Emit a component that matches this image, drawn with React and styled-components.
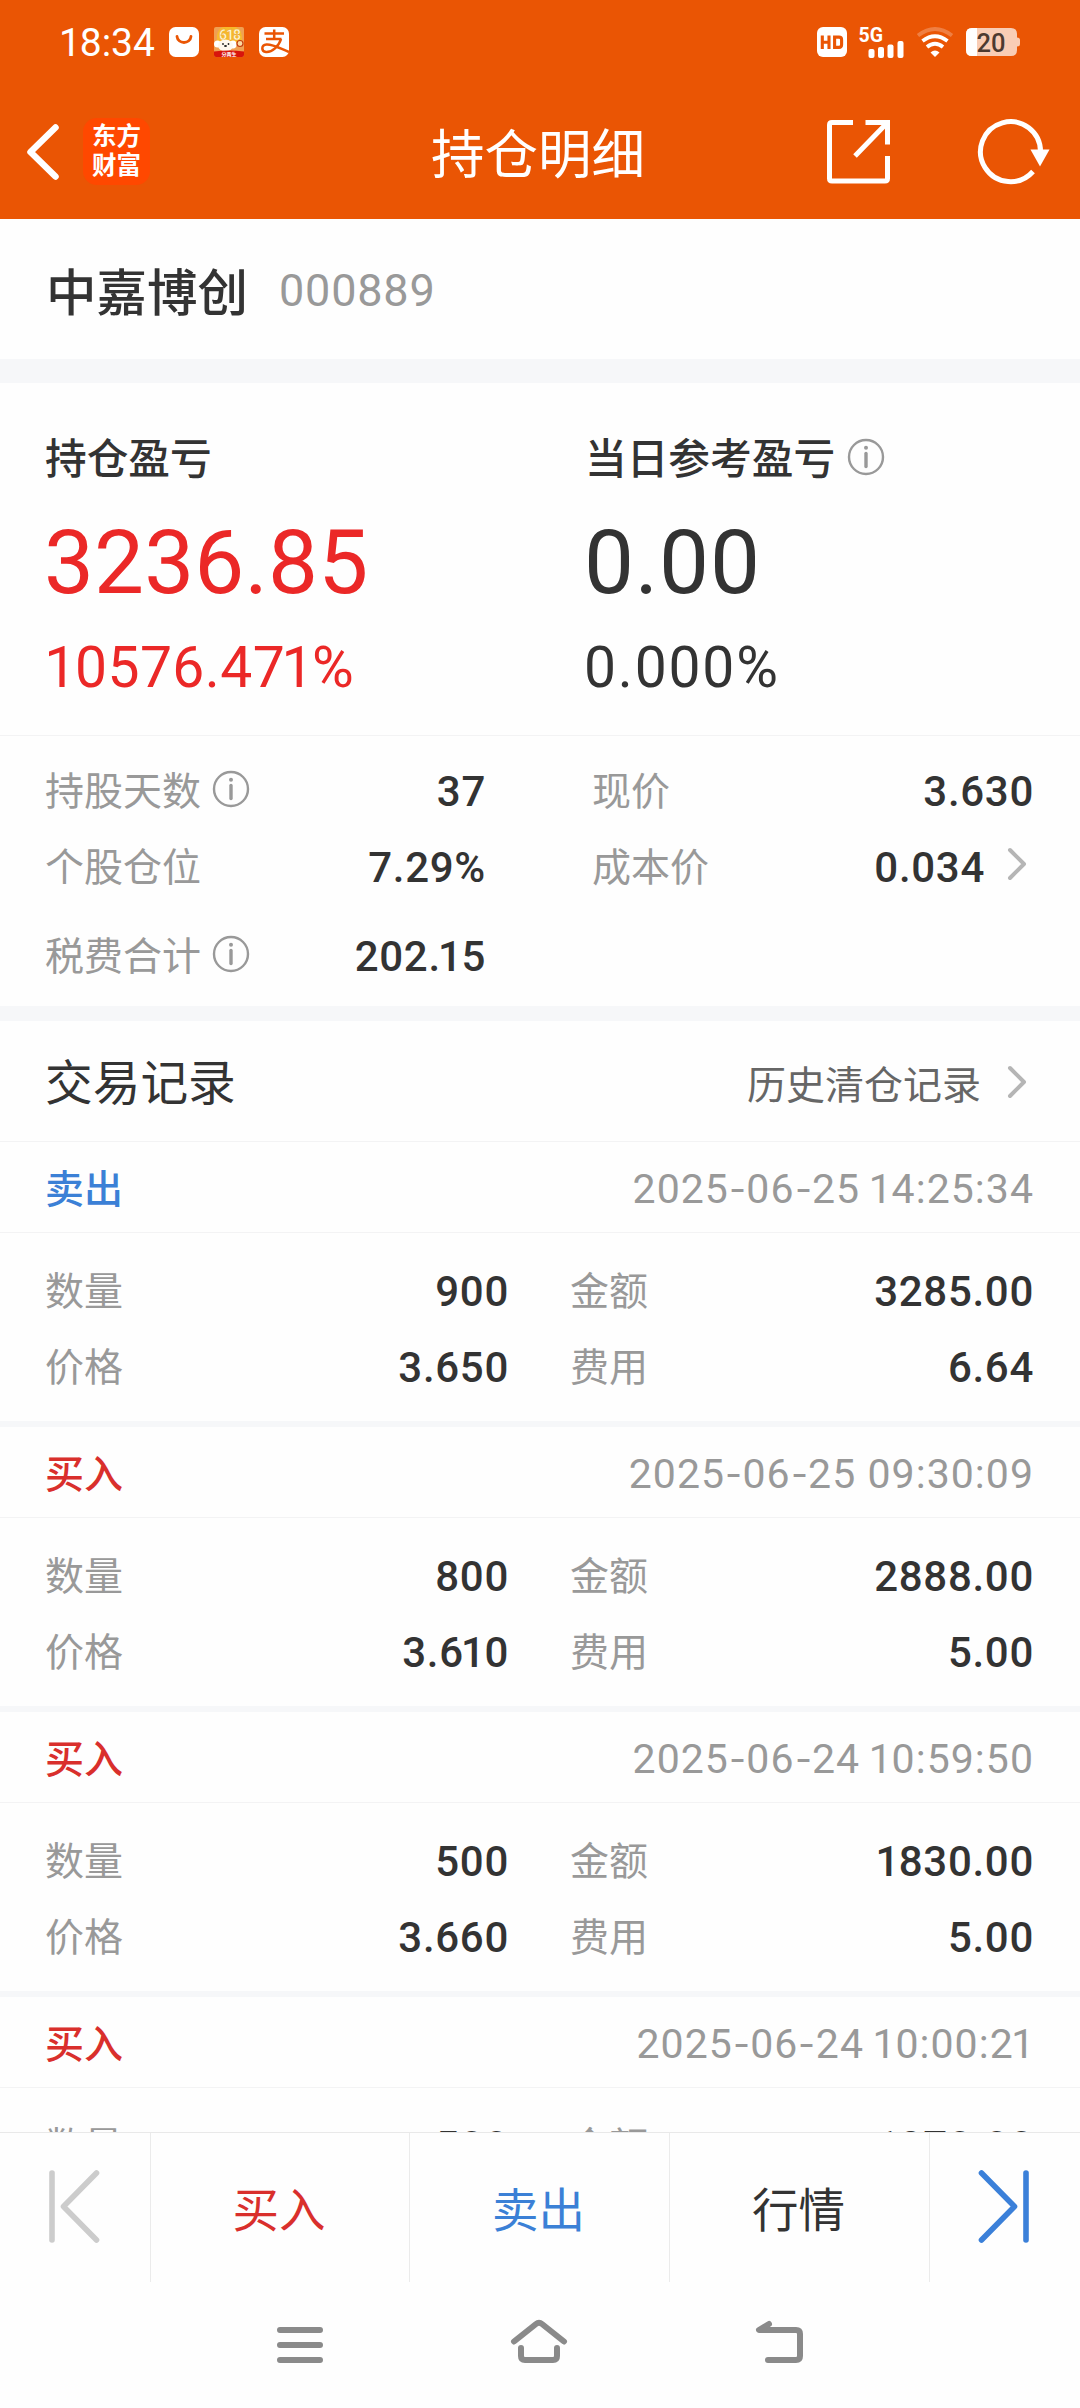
import React from "react";
import styled, { createGlobalStyle } from "styled-components";

const cjk = `"Noto Sans CJK SC", sans-serif`;
const mixed = `Roboto, "Noto Sans CJK SC", sans-serif`;

const Global = createGlobalStyle`
  * { box-sizing: border-box; }
  html, body { margin: 0; padding: 0; background: #fff; }
  body { font-family: ${mixed}; color: #333; }
  svg { display: block; flex: none; overflow: visible; }
`;

const Screen = styled.div`
  width: 1080px;
  height: 2408px;
  display: flex;
  flex-direction: column;
  overflow: hidden;
  background: #fefefe;
`;

/* ---------- header ---------- */
const Header = styled.header`
  height: 219px;
  flex: none;
  background: #ea5504;
  color: #fff;
`;
const StatusBar = styled.div`
  height: 84px;
  padding: 0 60px 0 59px;
  display: flex;
  align-items: center;
  justify-content: space-between;
`;
const StatusGroup = styled.div`
  display: flex;
  align-items: center;
  gap: ${(p) => p.$gap}px;
`;
const Clock = styled.span`
  font: 400 39px/44px ${mixed};
  width: 95px;
  padding: 2px 0 0 2.5px;
  white-space: nowrap;
`;
const TitleBar = styled.div`
  height: 135px;
  padding: 0 30px 0 26px;
  display: grid;
  grid-template-columns: 1fr auto 1fr;
  align-items: center;
`;
const TitleSide = styled.div`
  display: flex;
  align-items: center;
  justify-content: ${(p) => (p.$end ? "flex-end" : "flex-start")};
  gap: ${(p) => p.$gap}px;
`;
const Title = styled.h1`
  margin: 0 0 2px;
  font: 400 53.5px/70px ${cjk};
`;
const Logo = styled.div`
  width: 67px;
  height: 67px;
  padding-bottom: 5px;
  border-radius: 14px;
  background: #ff4800;
  display: flex;
  flex-direction: column;
  align-items: center;
  justify-content: center;
  font: 700 24.5px/29px ${cjk};
`;

/* ---------- shared ---------- */
const Band = styled.div`
  height: ${(p) => p.$h}px;
  flex: none;
  background: #f6f7f9;
`;
const Rule = styled.div`
  height: 1px;
  flex: none;
  background: #f3f3f4;
`;
const Label = styled.span`
  display: block;
  margin-left: -1px;
  padding-bottom: ${(p) => p.$lift ?? 4}px;
  font: ${(p) => p.$weight || 400} ${(p) => p.$size || 39}px/56px ${cjk};
  color: ${(p) => p.$color || "#999"};
  white-space: nowrap;
`;
const Value = styled.span`
  padding-top: 3px;
  font: 500 42px/56px ${mixed};
  letter-spacing: 0.7px;
  color: #333;
  white-space: nowrap;
`;
const WithIcon = styled.span`
  display: flex;
  align-items: center;
  gap: ${(p) => p.$gap}px;
`;
const One = styled.span`
  margin-left: -0.065em;
  margin-right: -0.03em;
`;

/* ---------- stock ---------- */
const Stock = styled.section`
  height: 140px;
  flex: none;
  padding: 0 46px;
  display: flex;
  align-items: center;
`;
const StockName = styled.h2`
  margin: 0 31px 1px 0;
  font: 500 50.5px/70px ${cjk};
`;
const StockCode = styled.span`
  padding-top: 4px;
  font: 400 45px/60px ${mixed};
  letter-spacing: 0.8px;
  color: #999;
`;

/* ---------- profit ---------- */
const Profit = styled.section`
  height: 352px;
  flex: none;
  display: grid;
  grid-template-columns: 540px 540px;
  padding-top: 45px;
`;
const ProfitColumn = styled.div`
  padding-left: 46px;
  color: ${(p) => p.$color};
`;
const ProfitAmount = styled.div`
  font: 400 89px/100px ${mixed};
  letter-spacing: ${(p) => p.$track}px;
  margin-left: -2px;
  margin-top: 25px;
`;
const ProfitRate = styled.div`
  font: 400 57px/70px ${mixed};
  letter-spacing: ${(p) => p.$track}px;
  margin-top: 20px;
  margin-left: ${(p) => p.$shift}px;
`;

/* ---------- stats ---------- */
const Stats = styled.section`
  height: 270px;
  flex: none;
  padding: 26px 46px 0;
  display: grid;
  grid-template-columns: 440px 441px;
  column-gap: 107px;
  grid-template-rows: 56px 56px 68px;
  row-gap: 20px;
  align-content: start;
`;
const Stat = styled.div`
  height: 56px;
  display: flex;
  align-items: center;
  justify-content: space-between;
  margin-top: ${(p) => (p.$late ? 13 : 0)}px;
`;
const LinkMark = styled.span`
  padding-right: 7px;
  padding-bottom: 4px;
`;

/* ---------- records ---------- */
const RecordsHead = styled.section`
  height: 120px;
  flex: none;
  padding: 2px 53px 0 46px;
  display: flex;
  align-items: center;
  justify-content: space-between;
`;
const Records = styled.div`
  flex: 1;
  min-height: 0;
  overflow: hidden;
`;
const RecordTop = styled.div`
  height: 90px;
  padding: 2px 46px 0;
  display: flex;
  align-items: center;
  justify-content: space-between;
`;
const DateText = styled.time`
  padding-top: 2px;
  font: 400 41px/56px ${mixed};
  letter-spacing: 1.05px;
  color: #999;
  white-space: nowrap;
`;
const Dash = styled.span`
  display: inline-block;
  padding: 0 2px 0 3px;
  transform: scaleX(1.2);
`;
const RecordBody = styled.div`
  height: 188px;
  padding: 29px 46px 0;
  display: grid;
  grid-template-columns: 463px 463px;
  grid-template-rows: 56px 56px;
  column-gap: 62px;
  row-gap: 20px;
`;

/* ---------- footer ---------- */
const TabBar = styled.nav`
  height: 150px;
  flex: none;
  border-top: 1px solid #e9e9e9;
  display: grid;
  grid-template-columns: 151px 259px 260px 260px 150px;
`;
const Tab = styled.div`
  display: flex;
  align-items: center;
  justify-content: center;
  padding: 0 2px ${(p) => (p.$icon ? 4 : 1)}px 0;
  border-right: ${(p) => (p.$last ? 0 : 1)}px solid #ebebeb;
  font: 400 46.5px/60px ${cjk};
  color: ${(p) => p.$color};
`;
const SystemNav = styled.div`
  height: 126px;
  flex: none;
  padding: 36px 276px 0 277px;
  display: flex;
  justify-content: space-between;
  align-items: flex-start;
`;

const InfoSvg = styled.svg`
  margin-bottom: 3px;
`;
const Info = () => (
  <InfoSvg width="38" height="38" viewBox="0 0 38 38" fill="none" stroke="#999">
    <circle cx="19" cy="19" r="17" strokeWidth="2.4" />
    <path d="M19 15.5V28.5" strokeWidth="3.4" strokeLinecap="round" />
    <circle cx="19" cy="9.7" r="2" fill="#999" stroke="none" />
  </InfoSvg>
);
const Chevron = () => (
  <svg width="20" height="36" viewBox="0 0 20 36" fill="none" stroke="#b5b5b5" strokeWidth="4" strokeLinecap="round" strokeLinejoin="round">
    <path d="M3 4L17 18L3 32" />
  </svg>
);
const StepIcon = ({ color, flip }) => (
  <svg width="52" height="74" viewBox="0 0 52 74" fill="none" stroke={color} strokeWidth="5.6" strokeLinecap="round" strokeLinejoin="round">
    <g transform={flip ? "translate(52 0) scale(-1 1)" : undefined}>
      <path d="M4 4V71" />
      <path d="M48.500 4L15.500 37.500L48.500 71" />
    </g>
  </svg>
);

const BagIcon = () => (
  <svg width="30" height="30" viewBox="0 0 30 30">
    <rect width="30" height="30" rx="6.500" fill="#fff" />
    <path d="M8 9.500C9 17.500 21 17.500 22 9.500" fill="none" stroke="#ea5504" strokeWidth="2.8" strokeLinecap="round" />
  </svg>
);
const PromoIcon = () => (
  <svg width="30" height="30" viewBox="0 0 30 30">
    <rect width="30" height="30" rx="2" fill="#f0a052" />
    <path d="M3 16V8Q5 0 10 0H22Q28 3 28 12V16Z" fill="#f8b92c" />
    <text x="15.500" y="12.500" fontFamily="Roboto, sans-serif" fontWeight="700" fontSize="14" letterSpacing="-1" textAnchor="middle" fill="#fffbd8" stroke="#e89a1c" strokeWidth="0.400">618</text>
    <ellipse cx="3.500" cy="17" rx="3.500" ry="3.500" fill="#fff" />
    <ellipse cx="19" cy="17.500" rx="3.500" ry="4" fill="#fff" />
    <ellipse cx="11.500" cy="18.500" rx="7.500" ry="6" fill="#fff8ee" />
    <circle cx="9" cy="17" r="0.900" fill="#222" />
    <circle cx="14.500" cy="17" r="0.900" fill="#222" />
    <ellipse cx="11.500" cy="19" rx="1.500" ry="1" fill="#222" />
    <circle cx="26" cy="16.500" r="3" fill="#fbd9a0" stroke="#c23a10" strokeWidth="1.200" />
    <path d="M0 24.500Q15 22.500 30 24.500V28Q30 30 28 30H2Q0 30 0 28Z" fill="#d8140c" />
    <text x="15" y="29" fontFamily="Noto Sans CJK SC, sans-serif" fontWeight="700" fontSize="5" textAnchor="middle" fill="#fff">分两生</text>
  </svg>
);
const PayIcon = () => (
  <svg width="30" height="30" viewBox="0 0 30 30">
    <rect width="30" height="30" rx="6.500" fill="#fff" />
    <g fill="none" stroke="#ea5504" strokeWidth="2.500">
      <path d="M5.500 6.500H25M15.200 2.500V12M7 12H22.500" />
      <path d="M22 12C20 19 13 25.500 7 25C2 24.500 2 18 7.500 17.500C14 17 21 21.500 30 25" />
    </g>
  </svg>
);
const HdIcon = () => (
  <svg width="30" height="30" viewBox="0 0 30 30">
    <rect width="30" height="30" rx="6" fill="#fff" />
    <g fill="none" stroke="#ea5504" strokeWidth="3.100">
      <path d="M5.300 8.500V22M12 8.500V22M5 15.200H12.500" />
      <path d="M17.600 10.100H22Q24.600 10.100 24.600 12.700V17.800Q24.600 20.400 22 20.400H17.600Z" />
    </g>
  </svg>
);
const SignalIcon = () => (
  <svg width="45" height="31" viewBox="0 0 45 31" fill="#fff">
    <text x="-0.500" y="15" fontFamily="Roboto, sans-serif" fontWeight="700" fontSize="20.500" textLength="24.500" lengthAdjust="spacingAndGlyphs">5G</text>
    <rect x="9.500" y="22" width="6" height="9" rx="2" />
    <rect x="19" y="20" width="6" height="11" rx="2" />
    <rect x="28.500" y="17.500" width="6" height="13.500" rx="2" />
    <rect x="38.500" y="14" width="6" height="17" rx="2" />
  </svg>
);
const WifiIcon = () => (
  <svg width="38" height="30" viewBox="0 0 38 30" fill="none" stroke="#fff" strokeWidth="3.800">
    <path d="M2 8.500Q19 -4.500 36 8.500" opacity="0.250" />
    <path d="M6.500 14Q19 4.500 31.500 14" />
    <path d="M11 20Q19 13.500 27 20" />
    <path d="M14.500 25.500Q19 21.500 23.500 25.500L19 30Z" fill="#fff" stroke="none" />
  </svg>
);
const BatteryIcon = () => (
  <svg width="54" height="28" viewBox="0 0 54 28">
    <path d="M6 0H45Q51 0 51 6V22Q51 28 45 28H6Q0 28 0 22V6Q0 0 6 0Z" fill="#f9cdb5" />
    <path d="M51 9.500Q54 9.500 54 12V16Q54 18.500 51 18.500Z" fill="#f9cdb5" />
    <path d="M11 0H6Q0 0 0 6V22Q0 28 6 28H11Z" fill="#fff" />
    <text x="25" y="23.500" fontFamily="Roboto, sans-serif" fontWeight="500" fontSize="25.500" textAnchor="middle" fill="#4d3a30">20</text>
  </svg>
);
const BackIcon = () => (
  <svg width="34" height="60" viewBox="0 0 34 60" fill="none" stroke="#fff" strokeWidth="6.500" strokeLinejoin="round" strokeLinecap="round">
    <path d="M29.500 5.500L4.500 30L29.500 54.500" />
  </svg>
);
const ShareIcon = () => (
  <svg width="64" height="64" viewBox="0 0 64 64" fill="none" stroke="#fff" strokeWidth="5">
    <path d="M26 2.500H5Q2.500 2.500 2.500 5V58.500Q2.500 61 5 61H58Q60.500 61 60.500 58.500V36" />
    <path d="M38.500 2.500H60.500V24.500M60 3L28 36" />
  </svg>
);
const RefreshIcon = () => (
  <svg width="72" height="66" viewBox="0 0 72 66" fill="none">
    <path d="M62.500 33A30 30 0 1 0 55 52.500" stroke="#fff" strokeWidth="5" />
    <path d="M52.500 30.500H71.500L62 47.500Z" fill="#fff" />
  </svg>
);
const MenuIcon = () => (
  <svg width="46" height="46" viewBox="0 0 46 46" stroke="#8a8a8a" strokeWidth="6" strokeLinecap="round">
    <path d="M3 12H43M3 27H43M3 42H43" />
  </svg>
);
const HomeIcon = () => (
  <svg width="58" height="46" viewBox="0 0 58 46" fill="none" stroke="#8a8a8a" strokeWidth="6" strokeLinecap="round" strokeLinejoin="round">
    <path d="M4 23.500L26 6Q29 3.500 32 6L54 23.500" />
    <path d="M11 30V38Q11 42 15 42H43Q47 42 47 38V30" />
  </svg>
);
const ReturnIcon = () => (
  <svg width="49" height="46" viewBox="0 0 49 46" fill="none" stroke="#8a8a8a" strokeWidth="6" strokeLinecap="round" strokeLinejoin="round">
    <path d="M14 6L4 12H41Q45 12 45 16V38Q45 42 41 42H13" />
  </svg>
);

const RED = "#d92f2c";
const BLUE = "#3b80d6";

const records = [
  { side: "卖出", color: BLUE, day: "2025-06-25", time: "14:25:34", qty: "900", amount: "3285.00", price: "3.650", fee: "6.64" },
  { side: "买入", color: RED, day: "2025-06-25", time: "09:30:09", qty: "800", amount: "2888.00", price: "3.610", fee: "5.00" },
  { side: "买入", color: RED, day: "2025-06-24", time: "10:59:50", qty: "500", amount: "1830.00", price: "3.660", fee: "5.00" },
  { side: "买入", color: RED, day: "2025-06-24", time: "10:00:21", qty: "500", amount: "1870.00", price: "3.740", fee: "5.00" },
];

/* Tightens the tabular "1" so figures read as proportional. */
const Digits = ({ children }) =>
  children.split(/(1)/).map((part, i) => (part === "1" ? <One key={i}>1</One> : part));

const DateTime = ({ day, time }) => {
  const [y, m, d] = day.split("-");
  return (
    <DateText>
      {y}<Dash>-</Dash>{m}<Dash>-</Dash>{d} <Digits>{time}</Digits>
    </DateText>
  );
};

const Pair = ({ label, value, info, link, late }) => (
  <Stat $late={late}>
    <WithIcon $gap={11}>
      <Label>{label}</Label>
      {info && <Info />}
    </WithIcon>
    <WithIcon $gap={22}>
      <Value><Digits>{value}</Digits></Value>
      {link && <LinkMark><Chevron /></LinkMark>}
    </WithIcon>
  </Stat>
);

const Record = ({ r }) => (
  <article>
    <RecordTop>
      <Label $weight={500} $color={r.color}>{r.side}</Label>
      <DateTime day={r.day} time={r.time} />
    </RecordTop>
    <Rule />
    <RecordBody>
      <Pair label="数量" value={r.qty} />
      <Pair label="金额" value={r.amount} />
      <Pair label="价格" value={r.price} />
      <Pair label="费用" value={r.fee} />
    </RecordBody>
    <Band $h={6} />
  </article>
);

export default function App() {
  return (
    <Screen>
      <Global />
      <Header>
        <StatusBar>
          <StatusGroup $gap={15}>
            <Clock><Digits>18:34</Digits></Clock>
            <BagIcon />
            <PromoIcon />
            <PayIcon />
          </StatusGroup>
          <StatusGroup $gap={12}>
            <HdIcon />
            <SignalIcon />
            <WifiIcon />
            <BatteryIcon />
          </StatusGroup>
        </StatusBar>
        <TitleBar>
          <TitleSide $gap={23}>
            <BackIcon />
            <Logo>
              <span>东方</span>
              <span>财富</span>
            </Logo>
          </TitleSide>
          <Title>持仓明细</Title>
          <TitleSide $end $gap={87}>
            <ShareIcon />
            <RefreshIcon />
          </TitleSide>
        </TitleBar>
      </Header>

      <Stock>
        <StockName>中嘉博创</StockName>
        <StockCode>000889</StockCode>
      </Stock>
      <Band $h={24} />

      <Profit>
        <ProfitColumn $color="#eb2827">
          <Label $size={41.7} $weight={500} $color="#333">持仓盈亏</Label>
          <ProfitAmount $track={0.1}>3236.85</ProfitAmount>
          <ProfitRate $track={0.4} $shift={2}><Digits>10576.471%</Digits></ProfitRate>
        </ProfitColumn>
        <ProfitColumn $color="#333">
          <WithIcon $gap={12}>
            <Label $size={41.7} $weight={500} $color="#333">当日参考盈亏</Label>
            <Info />
          </WithIcon>
          <ProfitAmount $track={0.8}>0.00</ProfitAmount>
          <ProfitRate $track={1.8} $shift={-2}>0.000%</ProfitRate>
        </ProfitColumn>
      </Profit>
      <Rule />

      <Stats>
        <Pair label="持股天数" value="37" info />
        <Pair label="现价" value="3.630" />
        <Pair label="个股仓位" value="7.29%" />
        <Pair label="成本价" value="0.034" link />
        <Pair label="税费合计" value="202.15" info late />
      </Stats>
      <Band $h={15} />

      <RecordsHead>
        <Label $size={47.7} $lift={4} $color="#333">交易记录</Label>
        <WithIcon $gap={26}>
          <Label $lift={1} $color="#666">历史清仓记录</Label>
          <Chevron />
        </WithIcon>
      </RecordsHead>
      <Rule />
      <Records>
        {records.map((r) => (
          <Record key={r.day + r.time} r={r} />
        ))}
      </Records>

      <TabBar>
        <Tab $icon $color="#ccc"><StepIcon color="#ccc" /></Tab>
        <Tab $color={RED}>买入</Tab>
        <Tab $color={BLUE}>卖出</Tab>
        <Tab $color="#333">行情</Tab>
        <Tab $icon $last $color={BLUE}><StepIcon color="#3b80d9" flip /></Tab>
      </TabBar>
      <SystemNav>
        <MenuIcon />
        <HomeIcon />
        <ReturnIcon />
      </SystemNav>
    </Screen>
  );
}
